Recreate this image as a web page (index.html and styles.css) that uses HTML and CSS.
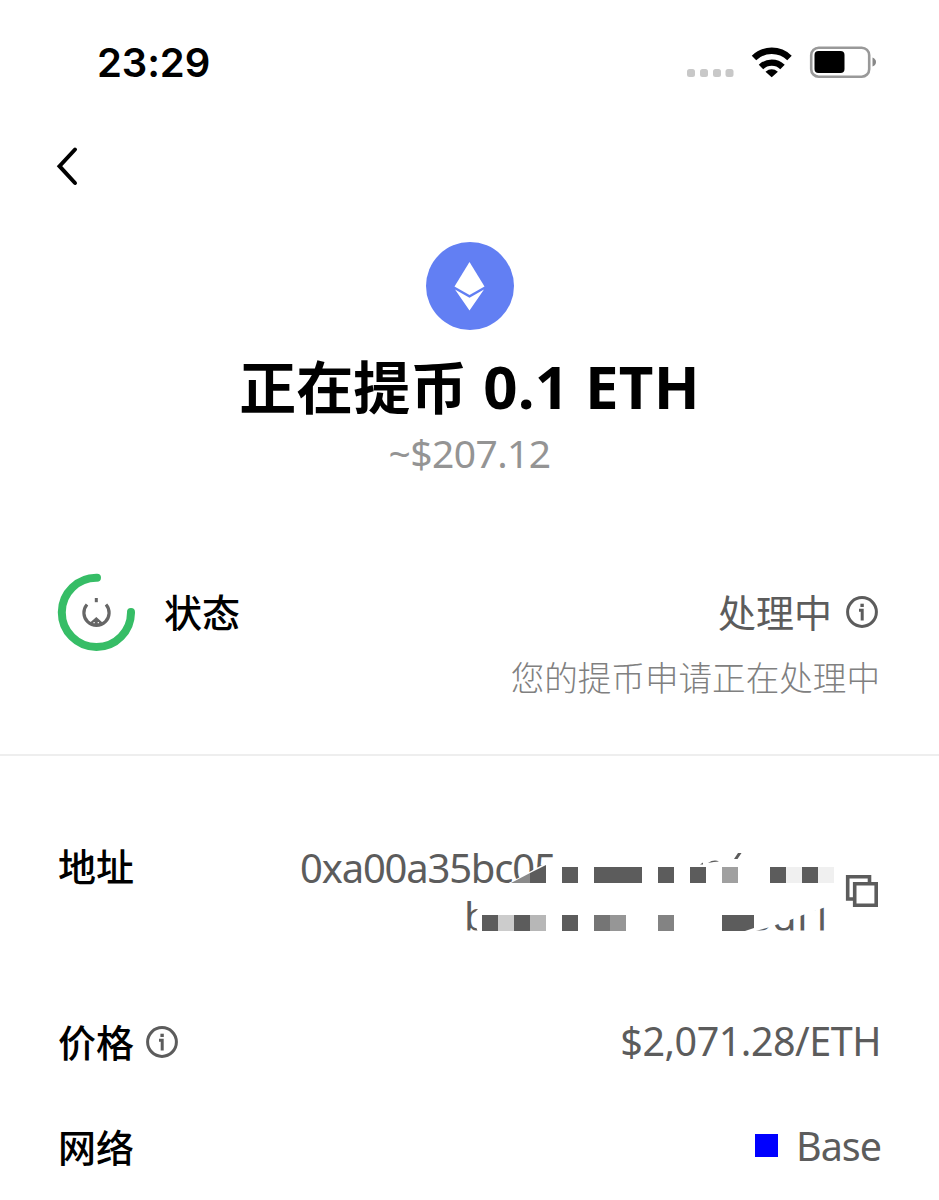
FILE: index.html
```
<!DOCTYPE html>
<html lang="zh-CN">
<head>
    <meta charset="UTF-8">
    <meta name="viewport" content="width=device-width, initial-scale=1.0">
    <title>提币详情</title>
    <link rel="stylesheet" href="styles.css">
</head>
<body>
    <header class="status-bar">
        <span class="time">23:29</span>
        <svg class="status-icons" width="192" height="36" viewBox="686 44 192 36">
            <g fill="#c8c8c8">
                <rect x="687" y="69" width="8" height="8" rx="2.5"/>
                <rect x="700" y="69" width="8" height="8" rx="2.5"/>
                <rect x="713" y="69" width="8" height="8" rx="2.5"/>
                <rect x="725.5" y="69" width="8" height="8" rx="2.5"/>
            </g>
            <g fill="none" stroke="#000" stroke-width="6.4">
                <path d="M754 58a25.500 25.500 0 0 1 35.500 0"/>
                <path d="M761 67a15.500 15.500 0 0 1 21.500 0"/>
            </g>
            <path d="M765.500 71.700q6.200-4.800 12.400 0l-6.200 5.500z"/>
            <rect x="811.200" y="47.700" width="58" height="29" rx="7.500" fill="#fff" stroke="#999" stroke-width="2.600"/>
            <rect x="814.500" y="51" width="30" height="22" rx="4"/>
            <path fill="#888" d="M872.500 57.500q3.500 1.500 3.500 4.500t-3.500 4.500z"/>
        </svg>
    </header>

    <nav class="nav">
        <svg class="back" width="22" height="40" viewBox="56 146 22 40">
            <path d="M75 149.500L59.500 166.200L75 183" fill="none" stroke="#000" stroke-width="4" stroke-linecap="round"/>
        </svg>
    </nav>

    <section class="summary">
        <svg class="coin" width="88" height="88" viewBox="0 0 88 88">
            <circle cx="44" cy="44" r="44" fill="#627ff3"/>
            <path d="M43.500 20L58.500 44.500L43.500 53L28.500 44.500z" fill="#fff"/>
            <path d="M29 47.500L43.500 55.800L58 47.500L43.500 68.500z" fill="#fff"/>
        </svg>
        <h1>正在提币 <span class="amount">0.1 ETH</span></h1>
        <p class="fiat">~$207.12</p>
    </section>

    <section class="status">
        <div class="row">
            <div class="label">
                <svg class="spinner" width="78" height="78" viewBox="57 573 78 78">
                    <path d="M97 577.800A34.600 34.600 0 1 0 131 612" fill="none" stroke="#36bd66" stroke-width="8" stroke-linecap="round"/>
                    <path d="M87 604.500A12.600 12.600 0 1 0 106 604.500" fill="none" stroke="#666" stroke-width="3.200"/>
                    <path d="M96.300 598v4.200" stroke="#666" stroke-width="3"/>
                    <path d="M89 623.500l7.300-6.500l7.300 6.500q-7.300 4-14.600 0z" fill="#666"/>
                    <path d="M93.500 622.600h1.200M97.700 622.600h1.200" stroke="#fff" stroke-width="1.200"/>
                </svg>
                <span>状态</span>
            </div>
            <div class="value state">
                <span>处理中</span>
                <svg class="info" width="32" height="32" viewBox="0 0 32 32">
                    <circle cx="16" cy="16" r="14.400"/>
                    <path d="M13 14.200h3.200v10.300"/>
                    <path class="dot" d="M14.400 7.700h3.400v3.300h-3.400z"/>
                </svg>
            </div>
        </div>
        <p class="hint">您的提币申请正在处理中</p>
    </section>

    <section class="details">
        <div class="row address">
            <span class="label">地址</span>
            <div class="hash">
                <div class="hash-line">0xa00a35bc05</div>
                <div class="hash-line second"><span>b</span><span class="tail">5df1</span></div>
                <svg class="mask" width="550" height="100" viewBox="290 840 550 100">
                    <!-- blank areas over the hidden characters -->
                    <path fill="#fff" d="M507 884L546 863L556 860V890H507z"/>
                    <path fill="#fff" d="M479 895V908L474 913V922L478 932H752L770 927L790 920L808 913L832 905V895z"/>
                    <path fill="#fff" d="M460 930.500H840V940H460z"/>
                    <path fill="#8a8a8a" d="M511 883L530 873V883z"/>
                    <path fill="#5c5c5c" d="M530 873L546 865V883H530z"/>
                    <g fill="#5c5c5c">
                        <path d="M562 867h16v16h-16zM594 867h48v16h-48zM658 867h16v16h-16zM690 867h16v16h-16zM770 867h16v16h-16zM802 867h16v16h-16z"/>
                        <path d="M482 915h16v16h-16zM514 915h16v16h-16zM562 915h16v16h-16zM722 915h32v13l-9 3h-23z"/>
                    </g>
                    <path fill="#f0f0f0" d="M786 867h16v16h-16zM818 867h16v16h-16z"/>
                    <path fill="#a0a0a0" d="M722 867h16v16h-16z"/>
                    <path fill="#ccc" d="M498 915h16v16h-16z"/>
                    <path fill="#b7b7b7" d="M530 915h16v16h-16z"/>
                    <path fill="#757575" d="M594 915h16v16h-16z"/>
                    <path fill="#969696" d="M610 915h16v16h-16z"/>
                    <path fill="#838383" d="M658 915h16v16h-16z"/>
                    <path fill="#5c5c5c" d="M700 864.500l3-2v2zM708 863q6-4 11-1.500q-5 0-11 1.500zM734 859l4-6h3.500l-4 6z"/>
                </svg>
            </div>
            <svg class="copy" width="34" height="34" viewBox="0 0 34 34">
                <path d="M8.500 25H2.700V2.700H24.500V8"/>
                <path d="M9.700 9.700h21.500v21.500H9.700z"/>
            </svg>
        </div>
        <div class="row price">
            <div class="label">
                <span>价格</span>
                <svg class="info" width="32" height="32" viewBox="0 0 32 32">
                    <circle cx="16" cy="16" r="14.400"/>
                    <path d="M13 14.200h3.200v10.300"/>
                    <path class="dot" d="M14.400 7.700h3.400v3.300h-3.400z"/>
                </svg>
            </div>
            <span class="value number">$2,071.28/ETH</span>
        </div>
        <div class="row network">
            <span class="label">网络</span>
            <div class="value base"><i class="base-logo"></i><span>Base</span></div>
        </div>
    </section>
</body>
</html>
```
FILE: styles.css
```
* {
    box-sizing: border-box;
}

body {
    margin: 0;
    height: 1200px;
    overflow: hidden;
    background-color: #fff;
    color: #000;
    font-family: "Noto Sans", "Noto Sans CJK SC", sans-serif;
}

h1, p {
    margin: 0;
}

svg {
    display: block;
    flex: none;
}

.status-bar {
    display: flex;
    justify-content: space-between;
    padding: 44px 61px 0 97px;
    height: 100px;
}

.time {
    font: 600 40px/38px Inter, sans-serif;
    letter-spacing: -0.1px;
}

.nav {
    height: 142px;
    padding: 46px 56px 0;
}

.summary {
    display: flex;
    flex-direction: column;
    align-items: center;
    height: 331px;
}

h1 {
    margin-top: 14px;
    font: bold 57px/80px "Noto Sans CJK SC", sans-serif;
    white-space: nowrap;
}

.amount {
    margin-left: 3px;
    font-family: "Noto Sans", sans-serif;
    font-size: 60px;
    letter-spacing: 0.2px;
}

.fiat {
    color: #949494;
    font-size: 39px;
    line-height: 54px;
    letter-spacing: -0.6px;
}

.row {
    display: flex;
    align-items: center;
    justify-content: space-between;
}

.label {
    display: flex;
    align-items: center;
    font-size: 38px;
    font-weight: 500;
    line-height: 56px;
}

.value {
    display: flex;
    align-items: center;
    color: #5c5c5c;
    font-size: 38px;
    line-height: 56px;
}

.status {
    height: 183px;
    padding: 0 59px 0 57px;
    border-bottom: 2px solid #eee;
}

.state {
    margin-right: 2px;
}

.spinner {
    margin-right: 29px;
}

.info {
    margin-left: 12px;
    fill: none;
    stroke: #5c5c5c;
    stroke-width: 3;
}

.state .info {
    margin-left: 14px;
}

.info .dot {
    fill: #5c5c5c;
    stroke: none;
}

.hint {
    margin-top: 2px;
    color: #808080;
    font-size: 33.6px;
    font-weight: 300;
    line-height: 50px;
    text-align: right;
}

.details {
    padding: 82px 59px 0 58px;
}

.address {
    position: relative;
    align-items: flex-start;
    height: 134px;
}

.hash {
    width: 528px;
    margin-left: auto;
    margin-right: 17px;
    padding-top: 6px;
    color: #5c5c5c;
    font-size: 40px;
    line-height: 48px;
    letter-spacing: -1.2px;
}

.second {
    display: flex;
    justify-content: space-between;
    padding-left: 164px;
}

.mask {
    position: absolute;
    left: 232px;
    top: 2px;
}

.tail {
    letter-spacing: -0.4px;
    margin-right: -4px;
}

.copy {
    margin-top: 36px;
    margin-right: 1px;
    fill: none;
    stroke: #5c5c5c;
    stroke-width: 3.6;
}

.price {
    margin-top: 42px;
}

.number {
    margin: -2px -1px 0 0;
    font-size: 39.5px;
    letter-spacing: -0.5px;
}

.network {
    margin-top: 49px;
}

.base {
    margin: -2px -1px 0 0;
    font-size: 39.5px;
    letter-spacing: -1px;
}

.base-logo {
    width: 23px;
    height: 23px;
    margin: -2px 18px 0 0;
    background-color: #00f;
}
```
